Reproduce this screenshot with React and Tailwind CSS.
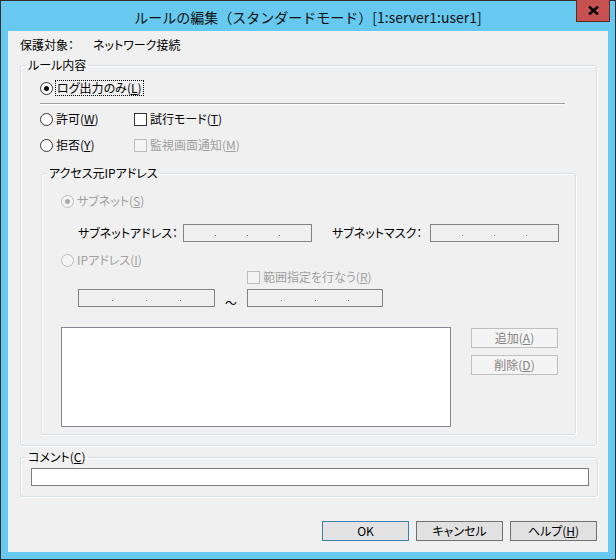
import React from 'react';

const font = "font-['Noto_Sans_CJK_JP','Noto_Sans',sans-serif] [font-feature-settings:'palt']";

function Radio({ checked, disabled }) {
  return (
    <span
      className={`flex h-[13px] w-[13px] shrink-0 items-center justify-center rounded-full border ${
        disabled ? 'border-[#bcbcbc] bg-[#f4f4f4]' : 'border-[#333333] bg-white'
      }`}
    >
      {checked && (
        <span className={`h-[5px] w-[5px] rounded-full ${disabled ? 'bg-[#a8a8a8]' : 'bg-black'}`} />
      )}
    </span>
  );
}

function Check({ disabled }) {
  return (
    <span
      className={`block h-[13px] w-[13px] shrink-0 border ${
        disabled ? 'border-[#bcbcbc] bg-[#f4f4f4]' : 'border-[#333333] bg-white'
      }`}
    />
  );
}

function IpBox({ className }) {
  return (
    <div className={`flex h-[18px] shrink-0 items-end justify-evenly border border-[#838383] bg-[#f0f0f0] pb-[5px] ${className}`}>
      <span className="h-px w-px bg-[#6d6d6d]" />
      <span className="h-px w-px bg-[#6d6d6d]" />
      <span className="h-px w-px bg-[#6d6d6d]" />
    </div>
  );
}

function Group({ title, className, children }) {
  return (
    <fieldset
      className={`rounded-[3px] border border-[#d5dfe5] shadow-[inset_1px_1px_0_#ffffff,1px_1px_0_#ffffff] ${className}`}
    >
      <legend className="ml-[5px] px-[2px] leading-[14px]">{title}</legend>
      {children}
    </fieldset>
  );
}

function Btn({ children, variant = 'normal' }) {
  const styles = {
    normal: 'border-[#707070] bg-[#e1e1e1] text-black',
    default: 'border-[#3c7fb1] bg-[#e3e3e3] text-black',
    disabled: 'border-[#bfbfbf] bg-[#f4f4f4] text-[#838383]',
  };
  return (
    <button
      className={`flex h-[20px] w-[87px] items-center justify-center border leading-[14px] ${styles[variant]}`}
    >
      {children}
    </button>
  );
}

export default function App() {
  return (
    <div className={`${font} relative h-[560px] w-[616px] border border-[#2d2d2d] bg-[#67c9ef] text-[12px] text-black`}>
      {/* title bar */}
      <div className="flex h-[30px] items-center justify-center pt-[2px] text-[14px] leading-[18px] text-[#111] [font-feature-settings:normal]">
        ルールの編集（スタンダードモード）[1:server1:user1]
      </div>
      <button className="absolute right-[5px] top-[-1px] flex h-[22px] w-[34px] items-center justify-center border border-t-0 border-[#5b2626] bg-[#c75050]">
        <svg width="11" height="9" viewBox="0 0 11 9">
          <path d="M1 0.5 L10 8.5 M10 0.5 L1 8.5" stroke="#000" strokeWidth="2.4" />
        </svg>
      </button>

      {/* dialog body */}
      <div className="mx-[7px] flex h-[521px] flex-col bg-[#f0f0f0] pl-[12px]">
        <div className="mt-[7px] flex leading-[14px]">
          <span className="w-[73px]">保護対象：</span>
          <span>ネットワーク接続</span>
        </div>

        <Group title="ルール内容" className="mt-[6px] w-[577px] pb-[10px]">
          <div className="ml-[19px] mt-[8px] flex h-[16px] items-center">
            <Radio checked />
            <span className="ml-[2px] border border-dotted border-black px-px leading-[14px]">
              ログ出力のみ(<u>L</u>)
            </span>
          </div>
          <div className="ml-[19px] mt-[7px] h-[2px] w-[525px] border-t border-[#a0a0a0] bg-white" />

          <div className="ml-[19px] mt-[7px] flex h-[14px] items-center">
            <div className="flex w-[94px] items-center">
              <Radio />
              <span className="ml-[3px]">許可(<u>W</u>)</span>
            </div>
            <Check />
            <span className="ml-[3px]">試行モード(<u>T</u>)</span>
          </div>

          <div className="ml-[19px] mt-[12px] flex h-[14px] items-center">
            <div className="flex w-[94px] items-center">
              <Radio />
              <span className="ml-[3px]">拒否(<u>Y</u>)</span>
            </div>
            <Check disabled />
            <span className="ml-[3px] text-[#a0a0a0]">監視画面通知(<u>M</u>)</span>
          </div>

          <Group title="アクセス元IPアドレス" className="ml-[20px] mt-[14px] w-[535px] pb-[7px]">
            <div className="ml-[19px] mt-[14px] flex h-[14px] items-center text-[#a0a0a0]">
              <Radio checked disabled />
              <span className="ml-[3px]">サブネット(<u>S</u>)</span>
            </div>

            <div className="ml-[36px] mt-[16px] flex h-[18px] items-center">
              <span className="w-[105px]">サブネットアドレス：</span>
              <IpBox className="w-[129px]" />
              <span className="ml-[20px] w-[98px]">サブネットマスク：</span>
              <IpBox className="w-[129px]" />
            </div>

            <div className="ml-[19px] mt-[11px] flex h-[14px] items-center text-[#a0a0a0]">
              <Radio disabled />
              <span className="ml-[3px]">IPアドレス(<u>I</u>)</span>
            </div>

            <div className="ml-[205px] mt-[3px] flex h-[14px] items-center text-[#a0a0a0]">
              <Check disabled />
              <span className="ml-[3px]">範囲指定を行なう(<u>R</u>)</span>
            </div>

            <div className="ml-[36px] mt-[5px] flex h-[18px] items-center">
              <IpBox className="w-[137px]" />
              <span className="flex w-[32px] justify-center pt-[10px] leading-[10px]">～</span>
              <IpBox className="w-[136px]" />
            </div>

            <div className="ml-[19px] mt-[20px] flex h-[100px] items-start">
              <div className="h-[100px] w-[390px] border border-[#828790] bg-white" />
              <div className="ml-[20px] mt-[1px] flex flex-col gap-[7px]">
                <Btn variant="disabled">追加(<u>A</u>)</Btn>
                <Btn variant="disabled">削除(<u>D</u>)</Btn>
              </div>
            </div>
          </Group>
        </Group>

        <Group title={<>コメント(<u>C</u>)</>} className="mt-[4px] w-[578px] pb-[10px]">
          <div className="ml-[10px] mt-[4px] h-[18px] w-[558px] border border-[#7a7a7a] bg-white" />
        </Group>

        <div className="mr-[11px] mt-[24px] flex justify-end gap-[7px]">
          <Btn variant="default">OK</Btn>
          <Btn>キャンセル</Btn>
          <Btn>ヘルプ(<u>H</u>)</Btn>
        </div>
      </div>
    </div>
  );
}
